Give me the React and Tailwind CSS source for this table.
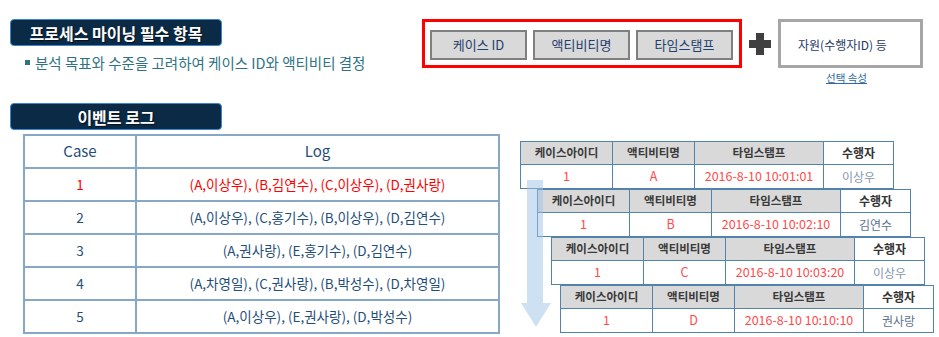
import React from 'react'

const logRows = [
  { c: '1', log: '(A,이상우), (B,김연수), (C,이상우), (D,권사랑)', hot: true },
  { c: '2', log: '(A,이상우), (C,홍기수), (B,이상우), (D,김연수)' },
  { c: '3', log: '(A,권사랑), (E,홍기수), (D,김연수)' },
  { c: '4', log: '(A,차영일), (C,권사랑), (B,박성수), (D,차영일)' },
  { c: '5', log: '(A,이상우), (E,권사랑), (D,박성수)' },
]

const events = [
  { act: 'A', ts: '2016-8-10 10:01:01', who: '이상우', ml: 'ml-0', whoColor: 'text-[#8496ad]' },
  { act: 'B', ts: '2016-8-10 10:02:10', who: '김연수', ml: 'ml-[17px]', whoColor: 'text-[#5d7190]' },
  { act: 'C', ts: '2016-8-10 10:03:20', who: '이상우', ml: 'ml-[31px]', whoColor: 'text-[#8496ad]' },
  { act: 'D', ts: '2016-8-10 10:10:10', who: '권사랑', ml: 'ml-[40px]', whoColor: 'text-[#5d7190]' },
]

function SectionTitle({ children }) {
  return (
    <div className="flex h-[27px] w-[212px] items-center justify-center rounded-[4px] border border-[#3a86d4] bg-[#0b2a46] text-[16px] font-bold text-white [text-shadow:1px_1px_1px_rgba(0,0,0,0.6)]">
      {children}
    </div>
  )
}

function EventCard({ e }) {
  const head = 'border border-[#5283ab] bg-[#d9d9d9] text-[11.5px] font-bold text-[#3a3a3a]'
  const cell = 'border border-[#5283ab] bg-white text-[12.5px] text-[#ff4b4b]'
  return (
    <table className={`${e.ml} w-[373px] table-fixed border-collapse text-center`}>
      <colgroup>
        <col className="w-[92px]" />
        <col className="w-[82px]" />
        <col className="w-[129px]" />
        <col className="w-[70px]" />
      </colgroup>
      <tbody>
        <tr className="h-[23px]">
          <td className={head}>케이스아이디</td>
          <td className={head}>액티비티명</td>
          <td className={head}>타임스탬프</td>
          <td className="border border-[#5283ab] bg-white text-[12px] font-bold text-[#333]">수행자</td>
        </tr>
        <tr className="h-[24px]">
          <td className={cell}>1</td>
          <td className={cell}>{e.act}</td>
          <td className={cell}>{e.ts}</td>
          <td className={`border border-[#5283ab] bg-white text-[12px] ${e.whoColor}`}>{e.who}</td>
        </tr>
      </tbody>
    </table>
  )
}

export default function App() {
  return (
    <div className="h-[337px] w-[939px] overflow-hidden bg-white font-['Noto_Sans_CJK_KR',sans-serif]">
      {/* top */}
      <div className="flex h-[103px] pt-[19px]">
        <div className="w-[412px] pl-[10px]">
          <SectionTitle>프로세스 마이닝 필수 항목</SectionTitle>
          <div className="mt-[6px] flex items-center pl-[15px] text-[14.5px] text-[#2f7382]">
            <span className="mr-[5px] h-[5px] w-[5px] bg-[#2f7382]" />
            분석 목표와 수준을 고려하여 케이스 ID와 액티비티 결정
          </div>
        </div>

        <div className="ml-[10px] flex items-start">
          <div className="flex h-[49px] w-[320px] gap-[6px] border-[3px] border-[#ff0000] pl-[5px] pt-[8px]">
            {['케이스 ID', '액티비티명', '타임스탬프'].map((t) => (
              <div
                key={t}
                className="flex h-[30px] w-[97px] items-center justify-center border-2 border-[#7f7f7f] bg-[#d9d9d9] text-[13px] text-[#1f3f6e]"
              >
                {t}
              </div>
            ))}
          </div>

          <svg width="36" height="49" viewBox="0 0 36 49" className="shrink-0">
            <path d="M14 14h8v7h7v8h-7v7h-8v-7h-7v-8h7z" fill="#404040" />
          </svg>

          <div className="flex flex-col items-center">
            <div className="flex h-[49px] w-[145px] items-center border-[3px] border-[#a6a6a6] pl-[17px] pt-[2px] text-[12px] text-[#1f3864]">
              자원(수행자ID) 등
            </div>
            <a className="mt-[2px] pr-[8px] text-[10.5px] text-[#2e6aa0] underline">선택 속성</a>
          </div>
        </div>
      </div>

      {/* bottom */}
      <div className="flex">
        <div className="w-[510px] pl-[10px]">
          <SectionTitle>이벤트 로그</SectionTitle>
          <table className="ml-[13px] mt-[4px] w-[477px] table-fixed border-collapse text-center text-[#1f4e79]">
            <colgroup>
              <col className="w-[112px]" />
              <col />
            </colgroup>
            <thead>
              <tr className="h-[33px] text-[15px]">
                <th className="border-2 border-[#86a7c6] font-normal">Case</th>
                <th className="border-2 border-[#86a7c6] font-normal">Log</th>
              </tr>
            </thead>
            <tbody>
              {logRows.map((r) => (
                <tr key={r.c} className={`h-[33px] text-[13.5px] ${r.hot ? 'text-[#ff0000]' : ''}`}>
                  <td className="border-2 border-[#86a7c6]">{r.c}</td>
                  <td className="border-2 border-[#86a7c6]">{r.log}</td>
                </tr>
              ))}
            </tbody>
          </table>
        </div>

        <div className="relative ml-[10px] pt-[38px]">
          {events.map((e) => (
            <EventCard key={e.act} e={e} />
          ))}
          {/* flow arrow */}
          <svg
            className="pointer-events-none absolute left-0 top-[77px]"
            width="32"
            height="148"
            viewBox="0 0 32 148"
          >
            <path d="M7 0h16v123h8l-15 24l-15-24h6z" fill="#9dc3e6" fillOpacity="0.5" />
          </svg>
        </div>
      </div>
    </div>
  )
}
